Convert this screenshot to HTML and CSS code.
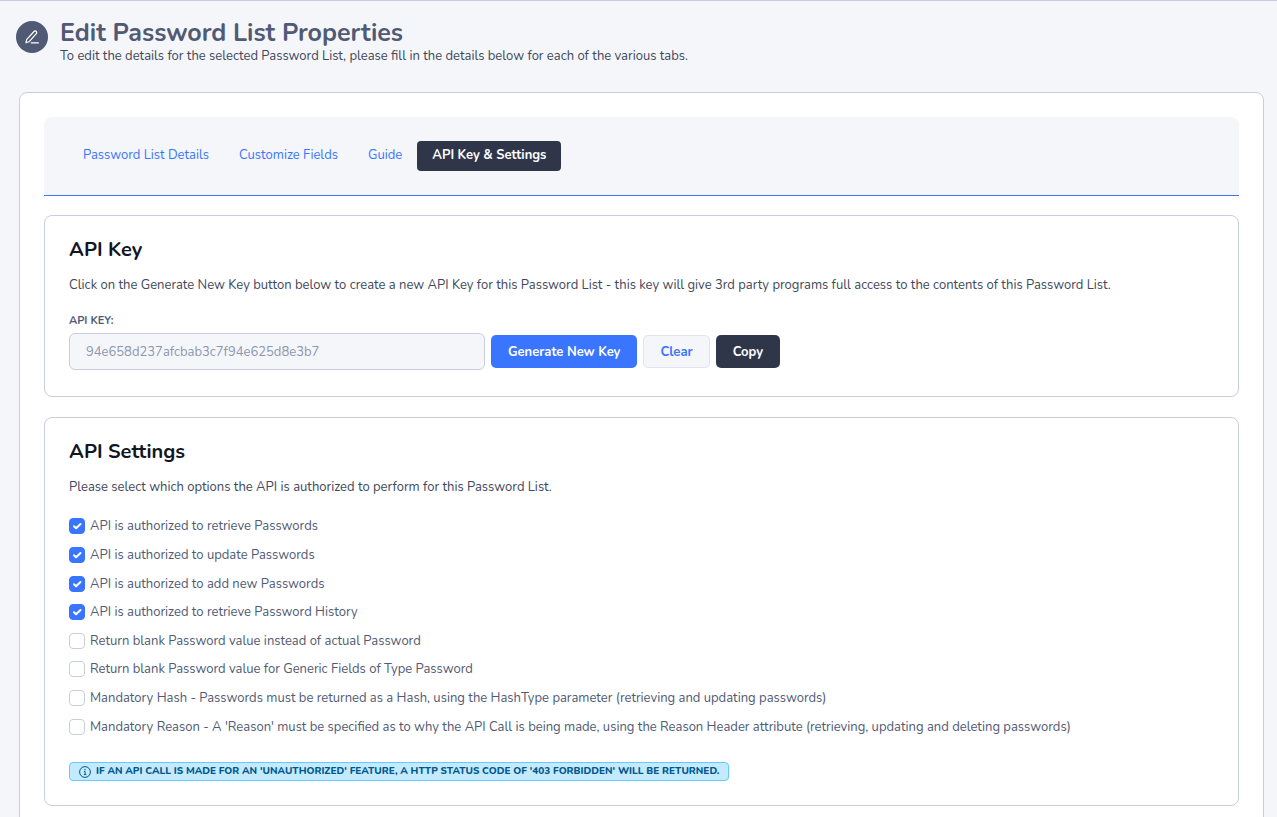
FILE: index.html
```html
<!DOCTYPE html>
<html lang="en">
<head>
    <meta charset="UTF-8">
    <meta name="viewport" content="width=device-width, initial-scale=1.0">
    <title>Edit Password List Properties</title>
    <link rel="stylesheet" href="styles.css">
</head>
<body>
    <header class="page-header">
        <span class="page-icon">
            <svg width="14" height="14" viewBox="0 0 14 14" fill="none" stroke="currentColor" stroke-width="1.2" stroke-linecap="round" stroke-linejoin="round">
                <path d="M1 12.8l.6-3.2L9 1.5a1.5 1.5 0 0 1 2.3 0 1.5 1.5 0 0 1 0 2.2L4 11.8z"/>
                <path d="M6.2 12.8h7.2"/>
            </svg>
        </span>
        <div>
            <h1>Edit Password List Properties</h1>
            <p>To edit the details for the selected Password List, please fill in the details below for each of the various tabs.</p>
        </div>
    </header>

    <main class="panel">
        <nav class="tabs">
            <a class="tab" href="#details">Password List Details</a>
            <a class="tab" href="#fields">Customize Fields</a>
            <a class="tab" href="#guide">Guide</a>
            <a class="tab active" href="#api">API Key &amp; Settings</a>
        </nav>

        <section class="card">
            <h2>API Key</h2>
            <p class="intro">Click on the Generate New Key button below to create a new API Key for this Password List - this key will give 3rd party programs full access to the contents of this Password List.</p>
            <label class="field-label" for="apiKey">API KEY:</label>
            <div class="key-row">
                <input class="key-input" type="text" id="apiKey" value="94e658d237afcbab3c7f94e625d8e3b7" readonly>
                <button class="btn btn-primary" type="button">Generate New Key</button>
                <button class="btn btn-light" type="button">Clear</button>
                <button class="btn btn-dark" type="button">Copy</button>
            </div>
        </section>

        <section class="card">
            <h2>API Settings</h2>
            <p class="intro">Please select which options the API is authorized to perform for this Password List.</p>
            <div class="options">
                <label class="option"><input type="checkbox" checked> API is authorized to retrieve Passwords</label>
                <label class="option"><input type="checkbox" checked> API is authorized to update Passwords</label>
                <label class="option"><input type="checkbox" checked> API is authorized to add new Passwords</label>
                <label class="option"><input type="checkbox" checked> API is authorized to retrieve Password History</label>
                <label class="option"><input type="checkbox"> Return blank Password value instead of actual Password</label>
                <label class="option"><input type="checkbox"> Return blank Password value for Generic Fields of Type Password</label>
                <label class="option"><input type="checkbox"> Mandatory Hash - Passwords must be returned as a Hash, using the HashType parameter (retrieving and updating passwords)</label>
                <label class="option"><input type="checkbox"> Mandatory Reason - A 'Reason' must be specified as to why the API Call is being made, using the Reason Header attribute (retrieving, updating and deleting passwords)</label>
            </div>
            <div class="notice">
                <svg width="12" height="12" viewBox="0 0 12 12" fill="none" stroke="currentColor">
                    <circle cx="6" cy="6" r="5.4"/>
                    <path d="M5 5.4h1.1v3M4.9 8.6h2.4"/>
                    <circle cx="6" cy="3.5" r=".7" fill="currentColor" stroke="none"/>
                </svg>
                <span>IF AN API CALL IS MADE FOR AN 'UNAUTHORIZED' FEATURE, A HTTP STATUS CODE OF '403 FORBIDDEN' WILL BE RETURNED.</span>
            </div>
        </section>
    </main>
</body>
</html>
```
FILE: styles.css
```css
* {
    box-sizing: border-box;
}
body {
    margin: 0;
    height: 100vh;
    overflow: hidden;
    border-top: 1px solid #c9cedf;
    background-color: #f5f6fa;
    color: #40485c;
    font-family: Nunito, "Open Sans", sans-serif;
    font-size: 13px;
    line-height: 20px;
}
h1, h2, p {
    margin: 0;
}
.page-header {
    display: flex;
    gap: 12px;
    padding: 16px 16px 28px;
}
.page-icon {
    display: flex;
    align-items: center;
    justify-content: center;
    flex: none;
    width: 32px;
    height: 32px;
    margin-top: 4px;
    border-radius: 50%;
    background-color: #505a75;
    color: #fff;
}
h1 {
    color: #505a75;
    font-size: 25px;
    font-weight: 700;
    line-height: 32px;
}
.page-header p {
    line-height: 15px;
}
.panel {
    margin: 0 13px 0 19px;
    padding: 24px;
    border: 1px solid #c9cedf;
    border-radius: 8px;
    background-color: #fff;
}
.tabs {
    display: flex;
    margin-bottom: 19px;
    padding: 24px;
    border-bottom: 1px solid #3975ff;
    border-radius: 8px 8px 0 0;
    background-color: #f5f6fa;
}
.tab {
    padding: 4px 15px 6px;
    border-radius: 4px;
    color: #3975ff;
    text-decoration: none;
}
.tab.active {
    background-color: #30364a;
    color: #fff;
    font-weight: 700;
}
.card {
    padding: 20px 24px 24px;
    border: 1px solid #c9cedf;
    border-radius: 8px;
}
.card + .card {
    margin-top: 20px;
}
h2 {
    color: #121621;
    font-size: 20px;
    font-weight: 700;
    line-height: 28px;
}
.intro {
    margin-top: 11px;
}
.field-label {
    display: block;
    margin-top: 16px;
    color: #505a75;
    font-size: 11px;
    font-weight: 700;
}
.key-row {
    display: flex;
    align-items: center;
    gap: 6px;
    padding: 2px 0;
}
.key-input {
    width: 416px;
    height: 37px;
    padding: 0 16px;
    border: 1px solid #c9cedf;
    border-radius: 6px;
    background-color: #f5f6fa;
    color: #8c96b0;
    font: inherit;
}
.btn {
    height: 33px;
    padding: 0 16px;
    border: 1px solid transparent;
    border-radius: 5px;
    font: inherit;
    font-weight: 700;
    white-space: nowrap;
}
.btn-primary {
    background-color: #3975ff;
    color: #fff;
}
.btn-light {
    border-color: #e2e5ef;
    background-color: #f5f6fa;
    color: #3975ff;
}
.btn-dark {
    background-color: #30364a;
    color: #fff;
}
.options {
    display: grid;
    grid-auto-rows: 1fr;
    min-height: 229px;
    margin-top: 15px;
}
.option {
    display: flex;
    align-items: center;
    gap: 5px;
    color: #505a75;
}
.option input {
    appearance: none;
    flex: none;
    width: 16px;
    height: 16px;
    margin: 0;
    border: 1px solid #c9cedf;
    border-radius: 4px;
    background-color: #fff;
}
.option input:checked {
    border-color: #3975ff;
    background: #3975ff url("data:image/svg+xml,%3Csvg xmlns='http://www.w3.org/2000/svg' width='14' height='14' fill='none' stroke='white' stroke-width='2' stroke-linecap='round' stroke-linejoin='round'%3E%3Cpath d='M4 7.2l2.1 2.1L10.5 5'/%3E%3C/svg%3E") center no-repeat;
}
.notice {
    display: flex;
    align-items: center;
    gap: 5px;
    width: fit-content;
    margin-top: 21px;
    padding: 0 9px;
    border: 1px solid #66c8ff;
    border-radius: 4px;
    background-color: #c4eaff;
    color: #00588a;
    font-size: 10px;
    font-weight: 800;
    line-height: 17px;
}
```
